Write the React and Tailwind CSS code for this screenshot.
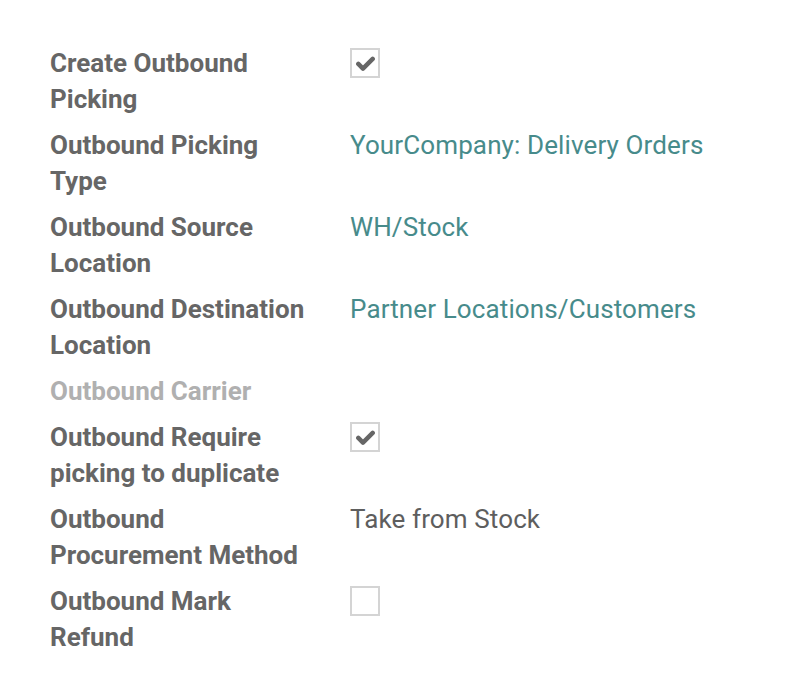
const rows = [
  { label: 'Create Outbound Picking', type: 'check', checked: true },
  { label: 'Outbound Picking Type', type: 'link', value: 'YourCompany: Delivery Orders' },
  { label: 'Outbound Source Location', type: 'link', value: 'WH/Stock' },
  { label: 'Outbound Destination Location', type: 'link', value: 'Partner Locations/Customers' },
  { label: 'Outbound Carrier', type: 'empty', muted: true },
  { label: 'Outbound Require picking to duplicate', type: 'check', checked: true },
  { label: 'Outbound Procurement Method', type: 'text', value: 'Take from Stock' },
  { label: 'Outbound Mark Refund', type: 'check', checked: false },
];

function Checkbox({ checked }) {
  return (
    <div className="w-[30px] h-[30px] border-2 border-[#d4d4d4] bg-white flex items-center justify-center mt-[3px]">
      {checked && (
        <svg width="19" height="15" viewBox="0 0 18 14">
          <path d="M2.2 7.4 L6.6 11.8 L15.8 2.6" fill="none" stroke="#666666" strokeWidth="4.2" strokeLinecap="round" strokeLinejoin="round" />
        </svg>
      )}
    </div>
  );
}

export default function App() {
  return (
    <div className="min-h-[694px] bg-white pt-[45px] pl-[50px] font-['Roboto',sans-serif] text-[26px] leading-[36px]">
      {rows.map((r) => (
        <div key={r.label} className="flex mb-[10px]">
          <div className={`w-[260px] mr-[40px] font-bold ${r.muted ? 'text-[#b0b0b0]' : 'text-[#666666]'}`}>
            {r.label}
          </div>
          <div className="tracking-[0.12px]">
            {r.type === 'check' && <Checkbox checked={r.checked} />}
            {r.type === 'link' && <span className="text-[#478b8b]">{r.value}</span>}
            {r.type === 'text' && <span className="text-[#5e5e5e]">{r.value}</span>}
          </div>
        </div>
      ))}
    </div>
  );
}
